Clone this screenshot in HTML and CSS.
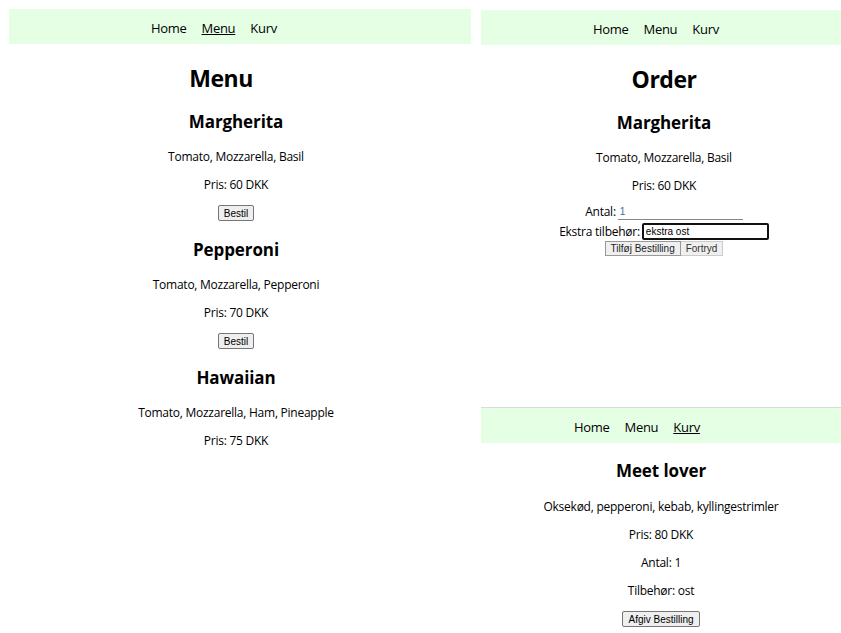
FILE: index.html
```html
<!DOCTYPE html>
<html>

<head>
    <title>Pizza</title>
    <link rel="stylesheet" href="styles.css">
</head>

<body>
    <div class="collage">
        <!-- menu page -->
        <section class="panel panel-menu">
            <nav class="nav">
                <a href="#">Home</a>
                <a href="#" class="active">Menu</a>
                <a href="#">Kurv</a>
            </nav>
            <main class="content">
                <h1 class="title">Menu</h1>
                <div class="pizza">
                    <h2>Margherita</h2>
                    <p>Tomato, Mozzarella, Basil</p>
                    <p>Pris: 60 DKK</p>
                    <div class="actions"><button type="button" class="btn">Bestil</button></div>
                </div>
                <div class="pizza">
                    <h2>Pepperoni</h2>
                    <p>Tomato, Mozzarella, Pepperoni</p>
                    <p>Pris: 70 DKK</p>
                    <div class="actions"><button type="button" class="btn">Bestil</button></div>
                </div>
                <div class="pizza">
                    <h2>Hawaiian</h2>
                    <p>Tomato, Mozzarella, Ham, Pineapple</p>
                    <p>Pris: 75 DKK</p>
                </div>
            </main>
        </section>

        <div class="column">
            <!-- order page -->
            <section class="panel panel-order">
                <nav class="nav">
                    <a href="#">Home</a>
                    <a href="#">Menu</a>
                    <a href="#">Kurv</a>
                </nav>
                <main class="content">
                    <h1>Order</h1>
                    <h2>Margherita</h2>
                    <p>Tomato, Mozzarella, Basil</p>
                    <p class="price">Pris: 60 DKK</p>
                    <form class="order-form">
                        <div class="row row-amount">
                            <label for="antal">Antal:</label><input type="text" id="antal" class="field field-plain" value="1">
                        </div>
                        <div class="row row-extra">
                            <label for="extra">Ekstra tilbehør:</label><input type="text" id="extra" class="field field-focus" value="ekstra ost">
                        </div>
                        <div class="row">
                            <button type="button" class="btn-flat btn-add">Tilføj Bestilling</button><button type="button" class="btn-flat btn-cancel">Fortryd</button>
                        </div>
                    </form>
                </main>
            </section>

            <!-- cart page -->
            <section class="panel panel-cart">
                <nav class="nav">
                    <a href="#">Home</a>
                    <a href="#">Menu</a>
                    <a href="#" class="active">Kurv</a>
                </nav>
                <main class="content">
                    <h2>Meet lover</h2>
                    <p>Oksekød, pepperoni, kebab, kyllingestrimler</p>
                    <p>Pris: 80 DKK</p>
                    <p>Antal: 1</p>
                    <p>Tilbehør: ost</p>
                    <div class="actions"><button type="button" class="btn">Afgiv Bestilling</button></div>
                </main>
            </section>
        </div>
    </div>
</body>

</html>
```

FILE: styles.css
```css
body {
    margin: 0;
    padding: 0;
    font-family: "Open Sans", "Noto Sans", sans-serif;
    font-size: 12px;
    letter-spacing: -0.25px;
    color: #000;
    background-color: #fff;
}

.collage {
    display: flex;
    gap: 10px;
    padding: 9px 0 0 9px;
}

.panel-menu {
    width: 462px;
}

.column {
    width: 360px;
    padding-top: 1px;
    display: flex;
    flex-direction: column;
}

.panel-order {
    height: 397px;
}

.panel-cart {
    border-top: 1px solid #dadada;
}

/* navigation bar */
.nav {
    display: flex;
    align-items: center;
    gap: 15px;
    height: 35px;
    padding-top: 2px;
    box-sizing: border-box;
    background-color: #e5ffe5;
    font-size: 13px;
    letter-spacing: -0.3px;
}

.nav a {
    color: #000;
    text-decoration: none;
}

.nav a.active {
    text-decoration: underline;
}

.panel-menu .nav {
    padding-left: 142px;
}

.panel-order .nav {
    padding-left: 112px;
}

.panel-cart .nav {
    padding-left: 93px;
}

.content {
    text-align: center;
}

.panel-menu .content {
    padding-right: 8px;
}

.panel-menu .title {
    padding-right: 30px;
}

.panel-order .content {
    padding-left: 6px;
}

h1 {
    font-size: 23px;
    line-height: 32px;
    letter-spacing: -0.5px;
    margin: 18px 0 16px;
}

h2 {
    font-size: 17px;
    line-height: 24px;
    letter-spacing: -0.1px;
    margin: 15px 0;
}

p {
    margin: 12px 0;
    line-height: 16px;
}

.pizza + .pizza {
    margin-top: 17px;
}

.actions {
    display: flex;
    justify-content: center;
}

.btn {
    font-family: "Liberation Sans", Arial, sans-serif;
    font-size: 10px;
    letter-spacing: 0;
    height: 16px;
    box-sizing: border-box;
    padding: 0 5px;
    border: 1px solid #767676;
    border-radius: 2px;
    background-color: #efefef;
    color: #000;
}

.panel-cart h2 {
    margin: 16px 0;
}

/* order form */
.price {
    margin-bottom: 9px;
}

.order-form .row {
    display: flex;
    justify-content: center;
    align-items: center;
}

.row-amount {
    height: 17px;
    margin-bottom: 3px;
}

.row-extra {
    height: 17px;
    margin-bottom: 1px;
}

.order-form label {
    margin-right: 2px;
}

.field {
    font-family: "Liberation Sans", Arial, sans-serif;
    font-size: 10px;
    letter-spacing: 0;
    height: 17px;
    box-sizing: border-box;
    padding: 0 2px;
}

.field-plain {
    width: 125px;
    border: none;
    border-bottom: 1px solid #888;
    color: #3a6ea5;
}

.field-focus {
    width: 127px;
    border: 2px solid #111;
    border-radius: 2px;
    outline: none;
    color: #000;
}

.btn-flat {
    font-family: "Liberation Sans", Arial, sans-serif;
    font-size: 10px;
    letter-spacing: 0;
    height: 15px;
    padding: 0 5px;
    background-color: #efefef;
    color: #222;
    border: 1px solid #999;
}

.btn-cancel {
    border-color: #ccc;
    border-left: none;
    color: #333;
}
```
